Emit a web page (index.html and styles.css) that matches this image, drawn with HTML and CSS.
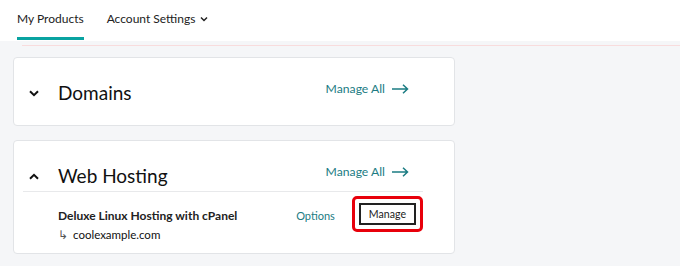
FILE: index.html
```html
<html>
	<head>
		<link rel="stylesheet" href="styles.css">
	</head>
	<body>
		<div class="topnav">
			<a class="tab active">My Products</a>
			<a class="tab">Account Settings
				<svg class="tabchev" width="8" height="6" viewBox="0 0 8 6"><path d="M1 1.5 L4 4.5 L7 1.5" fill="none" stroke="#222" stroke-width="1.5"/></svg>
			</a>
		</div>
		<div class="redline"></div>

		<div class="cards">
			<div class="card">
				<div class="card-head">
					<svg class="chev" width="10" height="7" viewBox="0 0 10 7"><path d="M1 1.2 L5 5.2 L9 1.2" fill="none" stroke="#111" stroke-width="2"/></svg>
					<span class="title">Domains</span>
					<a class="manage-all">Manage All
						<svg width="17" height="10" viewBox="0 0 17 10"><path d="M0 5 H15.5 M11 0.8 L15.5 5 L11 9.2" fill="none" stroke="#1b7c83" stroke-width="1.5"/></svg>
					</a>
				</div>
			</div>

			<div class="card open">
				<div class="card-head">
					<svg class="chev" width="10" height="7" viewBox="0 0 10 7"><path d="M1 5.8 L5 1.8 L9 5.8" fill="none" stroke="#111" stroke-width="2"/></svg>
					<span class="title">Web Hosting</span>
					<a class="manage-all">Manage All
						<svg width="17" height="10" viewBox="0 0 17 10"><path d="M0 5 H15.5 M11 0.8 L15.5 5 L11 9.2" fill="none" stroke="#1b7c83" stroke-width="1.5"/></svg>
					</a>
				</div>
				<div class="product">
					<div class="info">
						<div class="pname">Deluxe Linux Hosting with cPanel</div>
						<div class="domain"><span class="hook">&#8627;</span>coolexample.com</div>
					</div>
					<a class="options">Options</a>
					<div class="btnwrap">
						<span class="btn">Manage</span>
						<span class="highlight"></span>
					</div>
				</div>
			</div>
		</div>
	</body>
</html>
```

FILE: styles.css
```css
body {
	margin: 0;
	background: #f5f6f8;
	font-family: Lato, "Liberation Sans", sans-serif;
	color: #111;
}

.topnav {
	display: flex;
	gap: 23px;
	height: 41px;
	padding-left: 17px;
	background: #fff;
}

.tab {
	display: flex;
	align-items: center;
	gap: 5px;
	height: 40px;
	box-sizing: border-box;
	border-bottom: 3px solid transparent;
	font-size: 12px;
	color: #222;
}

.tab.active {
	border-bottom-color: #09a3a1;
}

.redline {
	height: 1px;
	margin: 4px 0 0 22px;
	background: #f8dcdd;
}

.cards {
	display: flex;
	flex-direction: column;
	gap: 14px;
	width: 442px;
	margin: 11px 0 0 13px;
}

.card {
	background: #fff;
	border: 1px solid #e2e4e7;
	border-radius: 4px;
	padding: 0 31px 0 9px;
}

.card-head {
	display: flex;
	align-items: center;
	padding: 23px 14px 20px 6px;
	line-height: 24px;
}

.card.open .card-head {
	padding-bottom: 3px;
	border-bottom: 1px solid #e8e9eb;
}

.chev {
	margin-right: 19px;
}

.title {
	flex: 1;
	font-size: 19px;
}

.manage-all {
	align-self: flex-start;
	display: flex;
	align-items: center;
	gap: 7px;
	height: 15px;
	line-height: 15px;
	font-size: 12.2px;
	color: #1b7c83;
}

.product {
	display: flex;
	align-items: flex-start;
	padding: 14px 7px 9px 35px;
	font-size: 12px;
	line-height: 19px;
}

.info {
	flex: 1;
}

.pname {
	font-weight: bold;
	color: #222;
}

.domain {
	font-size: 11.5px;
	color: #111;
}

.hook {
	color: #555;
	margin-right: 5px;
}

.options {
	font-size: 11px;
	color: #1b7c83;
	margin-right: 24px;
}

.btnwrap {
	position: relative;
	margin-top: -3px;
}

.btn {
	display: block;
	padding: 0 8px;
	height: 22px;
	line-height: 19px;
	box-sizing: border-box;
	border: 2px solid #222;
	color: #222;
	font-size: 10.6px;
}

.highlight {
	position: absolute;
	left: -7px;
	right: -7px;
	top: -7px;
	bottom: -7px;
	border: 3px solid #e8000b;
	border-radius: 5px;
}
```
